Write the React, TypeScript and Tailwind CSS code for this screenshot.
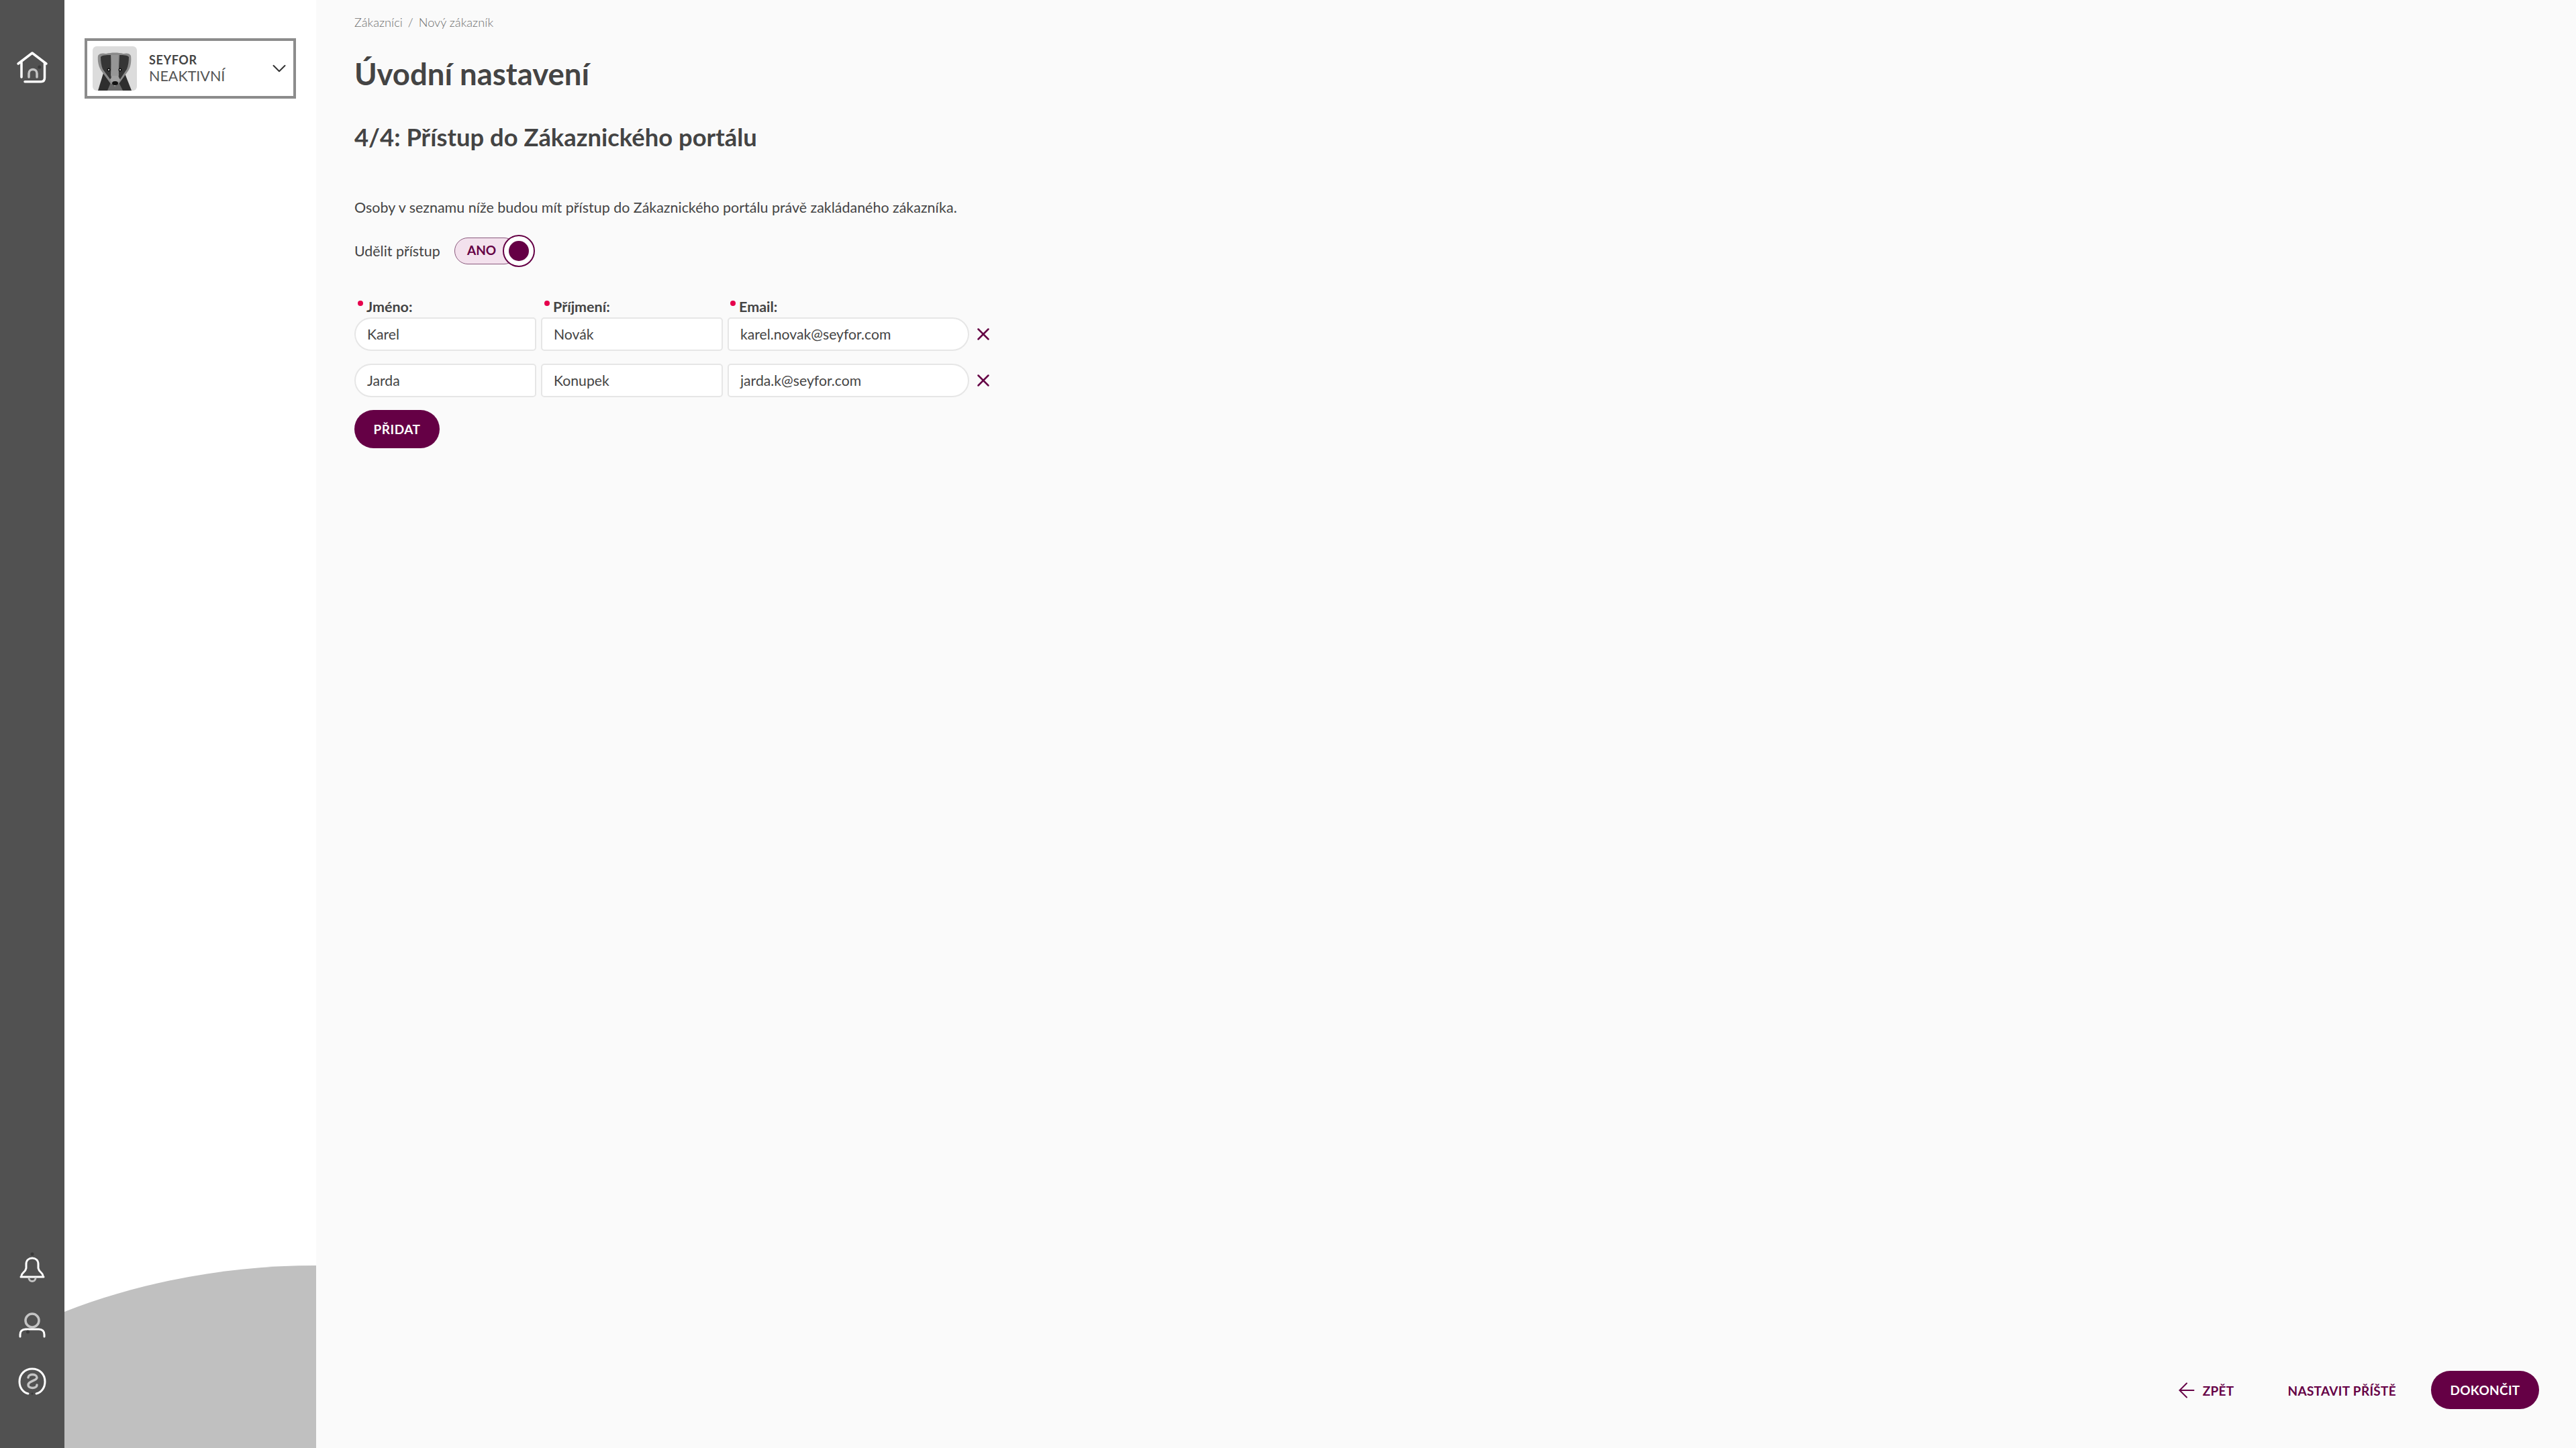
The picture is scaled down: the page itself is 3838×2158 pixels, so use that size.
import { ArrowLeft, ChevronDown, X } from "lucide-react";

const people = [
    { first: "Karel", last: "Novák", email: "karel.novak@seyfor.com" },
    { first: "Jarda", last: "Konupek", email: "jarda.k@seyfor.com" },
];

function HomeIcon() {
    return (
        <svg width="48" height="48" viewBox="0 0 48 48" fill="none" strokeLinecap="round" strokeLinejoin="round">
            <path d="M3 19 24 3l21 16" stroke="#fff" strokeWidth="3.5" />
            <path d="M8 17v22M42.500 18v22c0 3.500-2 5.700-5.500 5.700H13" stroke="#fff" strokeWidth="3.5" />
            <path d="M19 39v-5.500c0-8 12-8 12 0V39" stroke="#c4c4c4" strokeWidth="3.5" />
            <circle cx="34.700" cy="24" r="2.500" fill="#3a3a3a" />
        </svg>
    );
}

function BellIcon() {
    return (
        <svg width="40" height="48" viewBox="0 0 40 48" fill="none" strokeLinecap="round" strokeLinejoin="round">
            <circle cx="20" cy="3" r="2.500" fill="#3a3a3a" />
            <path d="M4 35c0-4 6-5 7-11v-6c0-6 4-9 9-9s9 3 9 9v6c1 6 7 7 7 11" stroke="#fff" strokeWidth="3" />
            <path d="M3 37h34" stroke="#fff" strokeWidth="3" />
            <path d="M15 39c.5 6 9.500 6 10 0" stroke="#c4c4c4" strokeWidth="3" />
        </svg>
    );
}

function UserIcon() {
    return (
        <svg width="40" height="38" viewBox="0 0 40 38" fill="none" strokeLinecap="round">
            <circle cx="20" cy="12" r="10" stroke="#c4c4c4" strokeWidth="3.5" />
            <path d="M2 36v-3c0-5 3-8 8-8h20c5 0 8 3 8 8v3" stroke="#fff" strokeWidth="3" />
            <circle cx="13.500" cy="29" r="2.500" fill="#3a3a3a" />
        </svg>
    );
}

function HelpIcon() {
    return (
        <svg width="42" height="42" viewBox="0 0 42 42" fill="none" strokeLinecap="round">
            <path d="M15 39C7 37 2 30 2 21 2 10 10 2 21 2s19 8 19 19c0 9-5 16-13 18" stroke="#fff" strokeWidth="3" />
            <path d="M15 15c0-6 13-6 13 0 0 5-13 5-13 11 0 6 13 6 13 0" stroke="#c4c4c4" strokeWidth="3.5" />
            <circle cx="21" cy="39" r="1.500" fill="#3a3a3a" />
        </svg>
    );
}

function Badger() {
    return (
        <svg width="66" height="66" viewBox="0 0 66 66" className="rounded-md bg-[#dcdcdc]">
            <path d="M8 66 16 40 47 38 58 66Z" fill="#2e2e2e" />
            <path d="M22 66 27 54H39L45 66Z" fill="#6a6a6a" />
            <path d="M8 14c2-4 8-4 12-3 8-2 18-2 26 0 4-1 9-1 11 3 1 8 0 18-5 24L39 56H27L14 38C9 32 7 22 8 14Z" fill="#8a8a8a" />
            <path d="M12 16c2-3 8-3 15-3l1 21c0 4 2 8 3 12l-5 3L15 34c-2-5-3-12-3-18Z" fill="#353535" />
            <path d="M54 16c-2-3-8-3-14-3l-1 21c0 4-2 8-3 12l5 3 10-15c2-5 3-12 3-18Z" fill="#353535" />
            <path d="M28 13h10l1 30-2 8h-8l-2-8Z" fill="#969696" />
            <path d="M26 50 33 60 41 50 38 44H29Z" fill="#a0a0a0" />
            <ellipse cx="33.500" cy="55" rx="4.500" ry="3" fill="#111" />
            <circle cx="24" cy="35" r="2.500" fill="#111" />
            <circle cx="24" cy="35" r="1" fill="#eee" />
            <circle cx="41" cy="35" r="2.500" fill="#111" />
            <circle cx="41" cy="35" r="1" fill="#eee" />
        </svg>
    );
}

function Required({ label, className }: { label: string; className: string }) {
    return (
        <div className={`flex items-center text-[21.5px] leading-6 font-bold text-[#444] ${className}`}>
            <span className="mr-[5px] mb-[10px] ml-[5px] size-[8px] rounded-full bg-[#e6004c]" />
            {label}
        </div>
    );
}

export default function App() {
    return (
        <div className="flex h-screen overflow-hidden bg-[#fafafa] font-['Lato',sans-serif] text-[#444]">
            {/* Icon rail */}
            <div className="flex w-[96px] shrink-0 flex-col items-center justify-between bg-[#515151] pt-[76px] pb-[78px]">
                <HomeIcon />
                <div className="flex flex-col items-center">
                    <BellIcon />
                    <div className="mt-[42px]">
                        <UserIcon />
                    </div>
                    <div className="mt-[44px]">
                        <HelpIcon />
                    </div>
                </div>
            </div>

            {/* Customer panel */}
            <div className="relative w-[375px] shrink-0 bg-white pt-[57px] pl-[30px]">
                <div className="flex h-[90px] w-[315px] items-center border-4 border-[#8c8c8c] pr-[4px] pl-[8px]">
                    <Badger />
                    <div className="ml-[18px] flex-1">
                        <div className="text-[18px] leading-[22px] font-bold tracking-[0.6px] text-[#444]">SEYFOR</div>
                        <div className="text-[21.5px] leading-[26px] text-[#555]">NEAKTIVNÍ</div>
                    </div>
                    <ChevronDown size={34} strokeWidth={1.4} className="text-[#333]" />
                </div>
                <svg className="absolute right-0 bottom-0 left-0" width="375" height="272" viewBox="0 0 375 272">
                    <path d="M0 69C120 22 250 0 375 0V272H0Z" fill="#c0c0c0" />
                </svg>
            </div>

            {/* Main */}
            <div className="flex min-w-0 flex-1 flex-col pt-[21px] pr-[55px] pb-[58px] pl-[57px]">
                <div className="flex gap-[8px] text-[18.2px] leading-6 font-light text-[#6f6f6f]">
                    <span>Zákazníci</span>
                    <span>/</span>
                    <span>Nový zákazník</span>
                </div>
                <h1 className="mt-[36px] text-[45.5px] leading-[58px] font-bold text-[#444]">Úvodní nastavení</h1>
                <h2 className="mt-[43px] text-[36.4px] leading-[44px] font-bold text-[#444]">4/4: Přístup do Zákaznického portálu</h2>

                <p className="mt-[69px] text-[21.45px] leading-7 text-[#444]">
                    Osoby v seznamu níže budou mít přístup do Zákaznického portálu právě zakládaného zákazníka.
                </p>

                <div className="mt-[31px] flex items-center">
                    <span className="w-[149px] text-[21.4px] leading-7">Udělit přístup</span>
                    <div className="relative flex h-[40px] w-[94px] items-center rounded-full border border-[#8a5a7d] bg-[#f3e1ed] pb-[1px] pl-[18px] text-[19px] font-bold text-[#650045]">
                        ANO
                        <div className="absolute -right-[27px] flex size-[48px] items-center justify-center rounded-full border-2 border-[#650045] bg-white">
                            <div className="size-[30px] rounded-full bg-[#650045]" />
                        </div>
                    </div>
                </div>

                <div className="mt-[51px] flex">
                    <Required label="Jméno:" className="w-[278px]" />
                    <Required label="Příjmení:" className="w-[277px]" />
                    <Required label="Email:" className="w-[359px]" />
                </div>

                <div className="mt-[4px] flex flex-col gap-[19px]">
                    {people.map((person) => (
                        <div key={person.email} className="flex items-center text-[21.2px] text-[#444]">
                            <div className="flex h-[50px] w-[271px] items-center rounded-l-[25px] rounded-r-[5px] border-2 border-[#e6e6e6] bg-white pt-[1px] pl-[17px]">
                                {person.first}
                            </div>
                            <div className="ml-[7px] flex h-[50px] w-[271px] items-center rounded-[5px] border-2 border-[#e6e6e6] bg-white pt-[1px] pl-[17px]">
                                {person.last}
                            </div>
                            <div className="ml-[7px] flex h-[50px] w-[360px] items-center rounded-l-[5px] rounded-r-[25px] border-2 border-[#e6e6e6] bg-white pt-[1px] pl-[17px]">
                                {person.email}
                            </div>
                            <X size={30} strokeWidth={2} className="ml-[6px] text-[#650045]" />
                        </div>
                    ))}
                </div>

                <button className="mt-[19px] h-[57px] w-[127px] rounded-full bg-[#650045] pt-[1px] text-[19px] font-bold tracking-[0.5px] text-white">
                    PŘIDAT
                </button>

                <div className="mt-auto flex items-center justify-end text-[19px] font-bold tracking-[0.3px] text-[#650045]">
                    <ArrowLeft size={36} strokeWidth={1.3} />
                    <span className="ml-[6px] pt-[3px]">ZPĚT</span>
                    <span className="ml-[80px] pt-[3px]">NASTAVIT PŘÍŠTĚ</span>
                    <button className="ml-[52px] h-[57px] w-[161px] rounded-full bg-[#650045] pt-[2px] text-white">DOKONČIT</button>
                </div>
            </div>
        </div>
    );
}
